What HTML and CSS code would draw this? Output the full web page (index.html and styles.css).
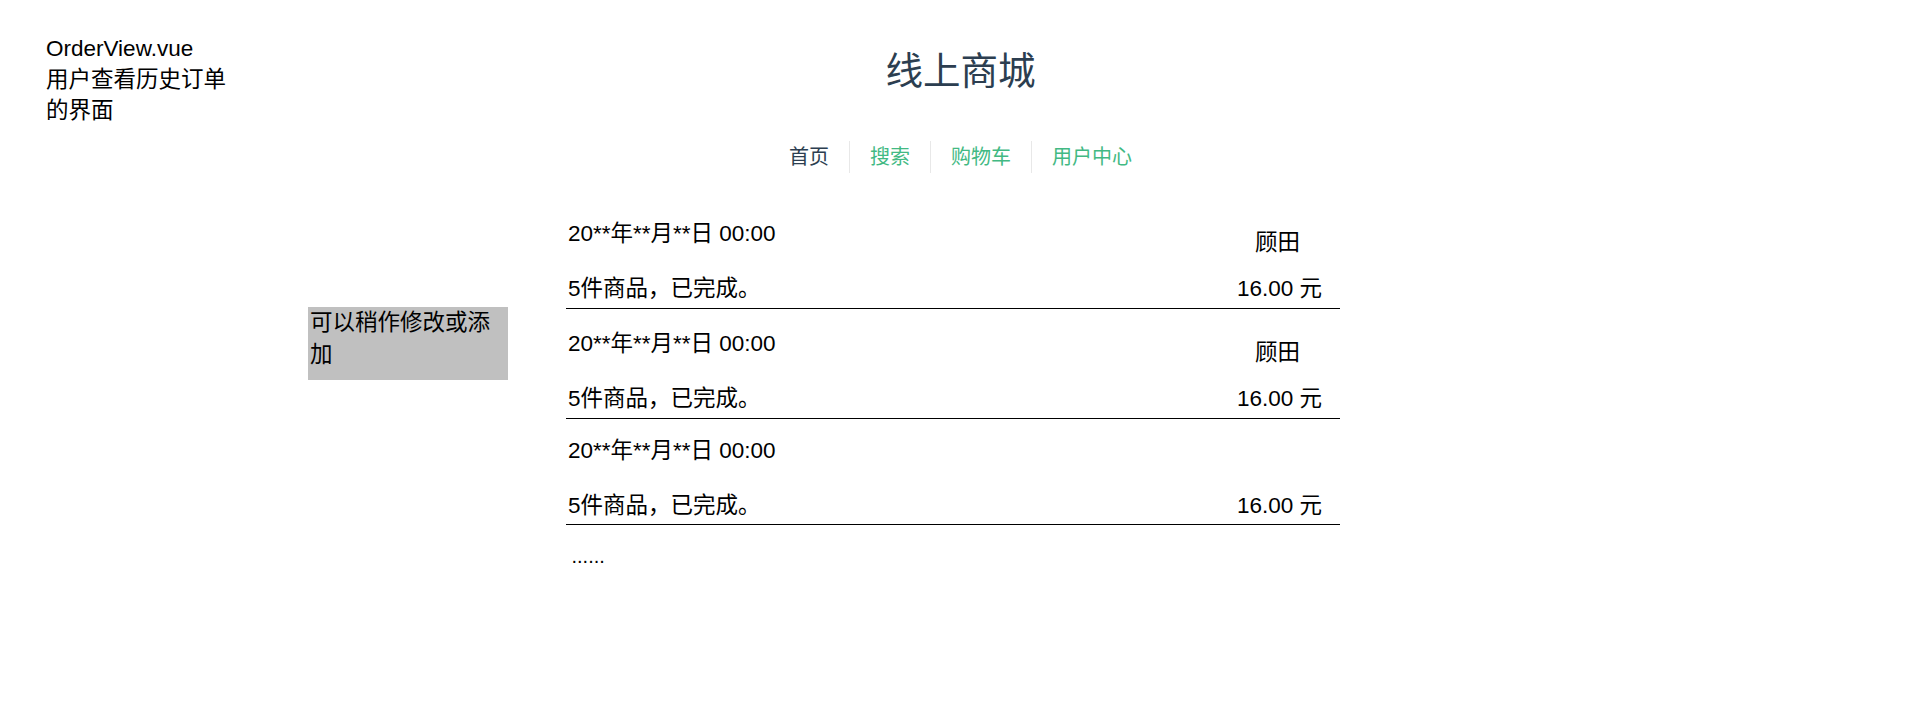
FILE: index.html
```html
<!DOCTYPE html>
<html lang="zh-CN">
<head>
<meta charset="utf-8">
<title>线上商城</title>
<link rel="stylesheet" href="styles.css">
</head>
<body>
<div class="page">
  <header class="top">
    <div class="note">OrderView.vue<br>用户查看历史订单的界面</div>
    <h1 class="title">线上商城</h1>
  </header>
  <nav class="nav">
    <a href="#" class="nav-link nav-link--active">首页</a>
    <a href="#" class="nav-link">搜索</a>
    <a href="#" class="nav-link">购物车</a>
    <a href="#" class="nav-link">用户中心</a>
  </nav>
  <main class="main">
    <aside class="tip">可以稍作修改或添加</aside>
    <section class="orders">
      <div class="order">
        <div class="order-head">
          <span class="date">20**年**月**日 00:00</span>
          <span class="shop">顾田</span>
        </div>
        <div class="order-foot">
          <span class="summary">5件商品，已完成。</span>
          <span class="price">16.00 元</span>
        </div>
      </div>
      <div class="order">
        <div class="order-head">
          <span class="date">20**年**月**日 00:00</span>
          <span class="shop">顾田</span>
        </div>
        <div class="order-foot">
          <span class="summary">5件商品，已完成。</span>
          <span class="price">16.00 元</span>
        </div>
      </div>
      <div class="order order--plain">
        <div class="order-head">
          <span class="date">20**年**月**日 00:00</span>
        </div>
        <div class="order-foot">
          <span class="summary">5件商品，已完成。</span>
          <span class="price">16.00 元</span>
        </div>
      </div>
      <p class="more">......</p>
    </section>
  </main>
</div>
</body>
</html>
```

FILE: styles.css
```css
html, body {
  margin: 0;
  padding: 0;
  background: #fff;
}

body {
  font-family: "Liberation Sans", "Noto Sans CJK SC", sans-serif;
  color: #000;
}

.top {
  display: grid;
  grid-template-columns: 1fr auto 1fr;
  align-items: start;
  padding-top: 33px;
}

.note {
  width: 200px;
  padding-left: 46px;
  font-size: 22.5px;
  line-height: 31px;
}

.title {
  margin: 15.5px 0 0;
  font-size: 37.5px;
  line-height: 45px;
  font-weight: normal;
  color: #2c3e50;
}

.nav {
  display: flex;
  justify-content: center;
  margin-top: 14.5px;
  font-size: 20px;
  line-height: 32px;
}

.nav-link {
  padding: 0 20px;
  border-left: 1px solid #e8e8e8;
  color: #42b983;
  text-decoration: none;
}

.nav-link:first-child {
  border-left: 0;
}

.nav-link--active {
  color: #2c3e50;
}

.main {
  display: flex;
  align-items: flex-start;
  padding-left: 308px;
  margin-top: 26.5px;
}

.tip {
  width: 200px;
  height: 73px;
  box-sizing: border-box;
  padding-left: 2px;
  margin-top: 108px;
  background: #c0c0c0;
  font-size: 22.5px;
  line-height: 32px;
}

.orders {
  width: 774px;
  margin-left: 58px;
  font-size: 22.5px;
  line-height: 30px;
}

.order {
  border-bottom: 1px solid #000;
  padding: 20px 18px 4.5px 2px;
}

.order--plain {
  padding-top: 17px;
  padding-bottom: 3px;
}

.order-head {
  display: flex;
  justify-content: space-between;
  height: 30px;
}

.shop {
  margin-top: 8.5px;
  margin-right: 22px;
}

.order-foot {
  display: flex;
  justify-content: space-between;
  margin-top: 24.5px;
}

.more {
  margin: 16px 0 0;
  padding-left: 5.5px;
  font-size: 20px;
  line-height: 30px;
}
```
